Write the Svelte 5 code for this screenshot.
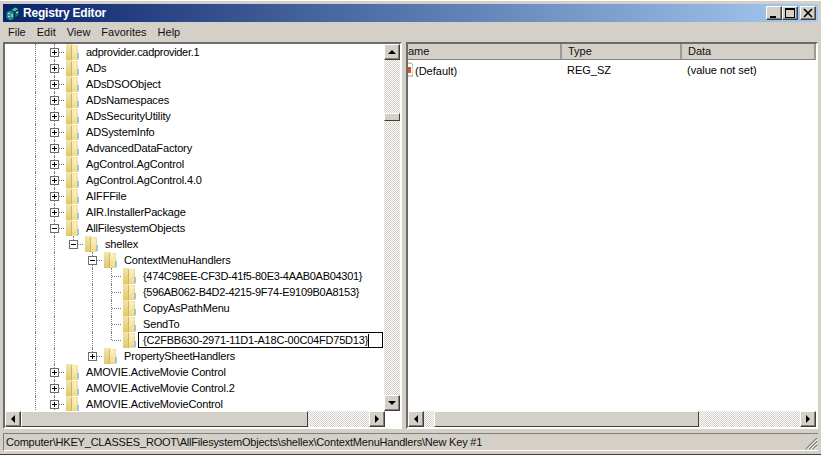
<script>
	// depth = number of indent cells; the last cell holds the box or the branch line
	const rows = [
		{ name: 'adprovider.cadprovider.1', depth: 2, box: '+', tight: true },
		{ name: 'ADs', depth: 2, box: '+' },
		{ name: 'ADsDSOObject', depth: 2, box: '+' },
		{ name: 'ADsNamespaces', depth: 2, box: '+' },
		{ name: 'ADsSecurityUtility', depth: 2, box: '+' },
		{ name: 'ADSystemInfo', depth: 2, box: '+' },
		{ name: 'AdvancedDataFactory', depth: 2, box: '+' },
		{ name: 'AgControl.AgControl', depth: 2, box: '+' },
		{ name: 'AgControl.AgControl.4.0', depth: 2, box: '+' },
		{ name: 'AIFFFile', depth: 2, box: '+' },
		{ name: 'AIR.InstallerPackage', depth: 2, box: '+' },
		{ name: 'AllFilesystemObjects', depth: 2, box: '-' },
		{ name: 'shellex', depth: 3, box: '-', last: true },
		{ name: 'ContextMenuHandlers', depth: 4, box: '-' },
		{ name: '{474C98EE-CF3D-41f5-80E3-4AAB0AB04301}', depth: 5, tight: true },
		{ name: '{596AB062-B4D2-4215-9F74-E9109B0A8153}', depth: 5, tight: true },
		{ name: 'CopyAsPathMenu', depth: 5 },
		{ name: 'SendTo', depth: 5 },
		{ name: '{C2FBB630-2971-11D1-A18C-00C04FD75D13}', depth: 5, editing: true, last: true },
		{ name: 'PropertySheetHandlers', depth: 4, box: '+', last: true },
		{ name: 'AMOVIE.ActiveMovie Control', depth: 2, box: '+' },
		{ name: 'AMOVIE.ActiveMovie Control.2', depth: 2, box: '+' },
		{ name: 'AMOVIE.ActiveMovieControl', depth: 2, box: '+' }
	];

	// columns 0, 1 and 3 keep running; column 2 ends at shellex
	function cells(row) {
		return [true, true, false, true].slice(0, row.depth - 1);
	}
</script>

<div class="window">
	<div class="titlebar">
		<svg class="appicon" width="16" height="16" viewBox="0 0 16 16">
			<path d="M1 7l5-2 3 2v7l-4 2-4-3z" fill="#1a8a92" stroke="#06343c" stroke-width=".8" />
			<path d="M6 5l4-3 4 2-4 3z" fill="#37c0c4" stroke="#06343c" stroke-width=".8" />
			<path d="M10 7l4-3v6l-4 3z" fill="#156e78" stroke="#06343c" stroke-width=".8" />
			<path d="M3 8l2 1M3 11l2 1M7 9v3M11 8l2-1" stroke="#e8f6f6" stroke-width="1" />
		</svg>
		<span class="title">Registry Editor</span>
		<div class="winbtns">
			<button class="winbtn"><svg width="10" height="10" viewBox="0 0 10 10"><rect x="1" y="8" width="6" height="2" /></svg></button>
			<button class="winbtn"><svg width="10" height="10" viewBox="0 0 10 10"><path d="M0 0h10v10H0zM1 2v7h8V2z" fill-rule="evenodd" /></svg></button>
			<button class="winbtn close"><svg width="10" height="10" viewBox="0 0 10 10"><path d="M1 1l8 8M9 1l-8 8" stroke="#000" stroke-width="1.6" /></svg></button>
		</div>
	</div>

	<div class="menubar">
		<span>File</span><span>Edit</span><span>View</span><span>Favorites</span><span>Help</span>
	</div>

	<div class="panes">
		<div class="pane left">
			<div class="pane-body">
				<div class="tree">
					{#each rows as row}
						<div class="row">
							{#each cells(row) as on}
								<span class="cell" class:guide={on}></span>
							{/each}
							<span class="cell branch" class:stub={row.last}>
								{#if row.box}
									<span class="box">
										<span class="h"></span>
										{#if row.box === '+'}<span class="v"></span>{/if}
									</span>
								{/if}
							</span>
							<svg class="folder" width="16" height="16" viewBox="0 0 16 16">
								<defs>
									<linearGradient id="fback" x1="0" y1="0" x2="0" y2="1">
										<stop offset="0" stop-color="#f3e6aa" />
										<stop offset="1" stop-color="#e3c869" />
									</linearGradient>
									<linearGradient id="ffront" x1="0" y1="0" x2="0" y2="1">
										<stop offset="0" stop-color="#fbf3c8" />
										<stop offset="1" stop-color="#f0d983" />
									</linearGradient>
								</defs>
								<path d="M2 0h6l1 1h5v15H2z" fill="url(#fback)" />
								<path d="M7 2l1-1v15H7z" fill="#cdb469" />
								<path d="M8 1.500l5 1V16H8z" fill="url(#ffront)" />
								<path d="M13 9h2v6h-2z" fill="#9cc8dc" />
							</svg>
							{#if row.editing}
								<span class="edit">{row.name}<i class="caret"></i></span>
							{:else}
								<span class="label" class:tight={row.tight}>{row.name}</span>
							{/if}
						</div>
					{/each}
				</div>
				<div class="vscroll">
					<button class="sbtn"><i class="arr up"></i></button>
					<div class="track first"></div>
					<div class="thumb-v"></div>
					<div class="track rest"></div>
					<button class="sbtn"><i class="arr down"></i></button>
				</div>
			</div>
			<div class="hscroll short">
				<button class="sbtn"><i class="arr left-a"></i></button>
				<div class="thumb-h w287"></div>
				<div class="track fill"></div>
				<button class="sbtn"><i class="arr right-a"></i></button>
			</div>
		</div>

		<div class="splitter"></div>

		<div class="pane right">
			<div class="list">
				<div class="head">
					<span class="hc name">ame</span>
					<span class="hc type">Type</span>
					<span class="hc data">Data</span>
				</div>
				<div class="value">
					<span class="vc name"><svg class="valicon" width="5" height="16" viewBox="0 0 5 16">
							<path d="M0 1h3l2 2v11H0" fill="#fff" stroke="#9a9a9a" />
							<rect x="0" y="5" width="3" height="6" fill="#d8502a" />
						</svg>(Default)</span>
					<span class="vc type">REG_SZ</span>
					<span class="vc data">(value not set)</span>
				</div>
			</div>
			<div class="hscroll">
				<button class="sbtn"><i class="arr left-a"></i></button>
				<div class="track w10"></div>
				<div class="thumb-h r-thumb"></div>
				<div class="track fill"></div>
				<button class="sbtn"><i class="arr right-a"></i></button>
			</div>
		</div>
	</div>

	<div class="status">
		<span>Computer\HKEY_CLASSES_ROOT\AllFilesystemObjects\shellex\ContextMenuHandlers\New Key #1</span>
		<svg class="grip" width="13" height="13" viewBox="0 0 13 13">
			<path d="M12 1L1 12M12 4.500L4.500 12M12 8L8 12" stroke="#808080" stroke-width="1.300" />
			<path d="M12 2.500L2.500 12M12 6L6 12M12 9.500L9.500 12" stroke="#fff" stroke-width="1" />
		</svg>
	</div>
</div>

<style>
	:global(body) {
		margin: 0;
		background: #d4d0c8;
	}

	.window {
		width: 821px;
		height: 455px;
		box-sizing: border-box;
		display: flex;
		flex-direction: column;
		padding: 4px 3px 3px;
		background: #d4d0c8;
		border-top: 1px solid #fff;
		border-bottom: 1px solid #404040;
		font-family: "Liberation Sans", sans-serif;
		font-size: 11px;
		color: #000;
		overflow: hidden;
	}

	.titlebar {
		height: 18px;
		flex: none;
		display: flex;
		align-items: center;
		padding: 0 2px;
		margin-top: -1px;
		background: linear-gradient(to right, #0a246a, #a6caf0);
	}

	.appicon {
		flex: none;
		margin-right: 2px;
	}

	.title {
		color: #fff;
		font-weight: 700;
		font-size: 12px;
		letter-spacing: -0.2px;
	}

	.winbtns {
		margin-left: auto;
		display: flex;
	}

	.winbtn {
		width: 16px;
		height: 14px;
		padding: 0;
		background: #d4d0c8;
		border: 1px solid;
		border-color: #fff #404040 #404040 #fff;
		box-shadow: inset -1px -1px 0 #808080;
		display: flex;
		align-items: center;
		justify-content: center;
	}

	.winbtn.close {
		margin-left: 2px;
	}

	.menubar {
		height: 20px;
		flex: none;
		display: flex;
		align-items: center;
		gap: 11px;
		padding-left: 5px;
		color: #111;
	}

	.panes {
		flex: 1;
		display: flex;
		min-height: 0;
	}

	.pane {
		display: flex;
		flex-direction: column;
		box-sizing: border-box;
		border: 2px solid;
		border-color: #6b6b6b #fff #fff #6b6b6b;
		background: #fff;
	}

	.pane.left {
		width: 399px;
	}

	.pane.right {
		width: 412px;
	}

	.splitter {
		width: 4px;
		flex: none;
	}

	.pane-body {
		flex: 1;
		min-height: 0;
		display: flex;
	}

	.tree {
		flex: 1;
		min-width: 0;
		overflow: hidden;
		padding-left: 21px;
	}

	.row {
		height: 16px;
		display: flex;
		align-items: center;
		white-space: nowrap;
	}

	.cell {
		position: relative;
		width: 19px;
		height: 16px;
		flex: none;
	}

	.guide::before,
	.branch::before {
		content: "";
		position: absolute;
		left: 9px;
		top: 0;
		bottom: 0;
		border-left: 1px dotted #808080;
	}

	.stub::before {
		bottom: 8px;
	}

	.branch::after {
		content: "";
		position: absolute;
		left: 10px;
		right: 0;
		top: 8px;
		border-top: 1px dotted #808080;
	}

	.box {
		position: absolute;
		left: 5px;
		top: 4px;
		width: 9px;
		height: 9px;
		box-sizing: border-box;
		border: 1px solid #6d6d6d;
		background: #fff;
		z-index: 1;
	}

	.box .h {
		position: absolute;
		left: 1px;
		top: 3px;
		width: 5px;
		height: 1px;
		background: #000;
	}

	.box .v {
		position: absolute;
		left: 3px;
		top: 1px;
		width: 1px;
		height: 5px;
		background: #000;
	}

	.folder {
		flex: none;
		margin-right: 6px;
	}

	.edit {
		margin-left: -5px;
		width: 245px;
		height: 16px;
		flex: none;
		box-sizing: border-box;
		border: 1px solid #000;
		padding-left: 4px;
		line-height: 14px;
		background: #fff;
		display: block;
		position: relative;
		letter-spacing: -0.2px;
	}

	.caret {
		display: inline-block;
		width: 1px;
		height: 13px;
		background: #000;
		vertical-align: -3px;
	}

	.label {
		letter-spacing: -0.15px;
	}

	.label.tight {
		letter-spacing: -0.3px;
	}

	.vscroll {
		width: 16px;
		flex: none;
		display: flex;
		flex-direction: column;
	}

	.track {
		background-color: #fff;
		background-image: conic-gradient(#d4d0c8 25%, #fff 0 50%, #d4d0c8 0 75%, #fff 0);
		background-size: 2px 2px;
	}

	.track.first {
		height: 53px;
		flex: none;
	}

	.track.rest,
	.track.fill {
		flex: 1;
	}

	.track.w10 {
		width: 10px;
		flex: none;
	}

	.thumb-v {
		height: 8px;
		flex: none;
		box-sizing: border-box;
		background: #d4d0c8;
		border: 1px solid;
		border-color: #fff #404040 #404040 #fff;
	}

	.hscroll {
		height: 16px;
		flex: none;
		display: flex;
	}

	.hscroll.short {
		margin-right: 15px;
	}

	.thumb-h {
		box-sizing: border-box;
		background: #d4d0c8;
		border: 1px solid;
		border-color: #fff #404040 #404040 #fff;
		flex: none;
	}

	.w287 {
		width: 287px;
	}

	.r-thumb {
		width: 265px;
	}

	.sbtn {
		width: 16px;
		height: 16px;
		flex: none;
		padding: 0;
		box-sizing: border-box;
		background: #d4d0c8;
		border: 1px solid;
		border-color: #fff #404040 #404040 #fff;
		box-shadow: inset -1px -1px 0 #808080;
		display: flex;
		align-items: center;
		justify-content: center;
	}

	.arr {
		width: 0;
		height: 0;
		border: 4px solid transparent;
	}

	.arr.up {
		border-top: 0;
		border-bottom-color: #000;
	}

	.arr.down {
		border-bottom: 0;
		border-top-color: #000;
	}

	.arr.left-a {
		border-left: 0;
		border-right-color: #000;
	}

	.arr.right-a {
		border-right: 0;
		border-left-color: #000;
	}

	.list {
		flex: 1;
		min-height: 0;
	}

	.head {
		height: 16px;
		display: flex;
		background: #d4d0c8;
		color: #111;
	}

	.hc {
		box-sizing: border-box;
		border-right: 2px solid #9a9a9a;
		line-height: 15px;
		border-bottom: 1px solid #808080;
	}

	.vc {
		box-sizing: border-box;
	}

	.hc.name,
	.vc.name {
		width: 154px;
		flex: none;
	}

	.hc.type,
	.vc.type {
		width: 120px;
		flex: none;
		padding-left: 5px;
	}

	.hc.data,
	.vc.data {
		flex: 1;
		padding-left: 5px;
	}

	.hc.type,
	.hc.data {
		padding-left: 6px;
	}

	.value {
		height: 16px;
		margin-top: 2px;
		display: flex;
		line-height: 16px;
	}

	.valicon {
		vertical-align: -3px;
		margin-right: 2px;
	}

	.status {
		height: 18px;
		flex: none;
		margin-top: 4px;
		display: flex;
		align-items: center;
		justify-content: space-between;
		padding-left: 2px;
		box-sizing: border-box;
		border-top: 1px solid #808080;
		border-left: 1px solid #808080;
		border-bottom: 1px solid #fff;
		color: #111;
		letter-spacing: -0.2px;
	}

	.grip {
		align-self: flex-end;
	}
</style>
